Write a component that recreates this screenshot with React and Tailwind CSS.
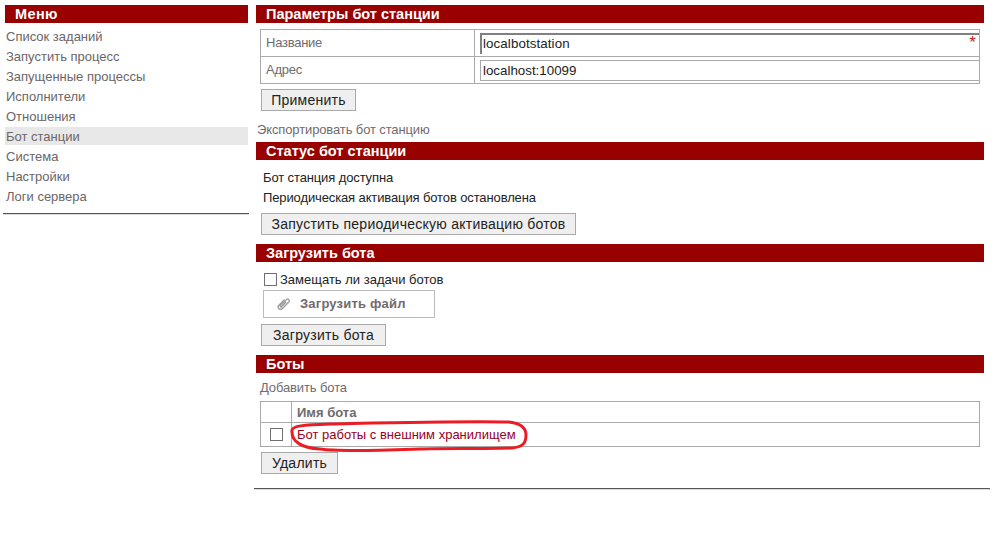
const font = { fontFamily: '"Liberation Sans", Arial, sans-serif' };

function Head({ children, className = "" }) {
  return <div className={"h-[18px] bg-[#990000] pl-[10px] text-[14.5px] leading-[18px] font-bold text-white " + className}>{children}</div>;
}

function Btn({ children, className = "" }) {
  return (
    <button className={"h-[22px] border border-[#a9a9a9] bg-[#efefef] px-0 text-[14px] leading-[19px] tracking-[0.25px] text-[#222] " + className}>
      {children}
    </button>
  );
}

const menu = ["Список заданий", "Запустить процесс", "Запущенные процессы", "Исполнители", "Отношения", "Бот станции", "Система", "Настройки", "Логи сервера"];

export default function App() {
  return (
    <div className="flex h-[537px] w-[997px] overflow-hidden bg-white text-[13px]" style={font}>
      <aside className="ml-[3px] mr-[5px] w-[246px] pt-[5px]">
        <div className="ml-[2px] w-[243px]">
          <Head className="pl-[10px] tracking-[0.4px]">Меню</Head>
          <ul className="mt-[4px] flex flex-col gap-[2px] text-[#6b6567]">
            {menu.map((m) => (
              <li key={m} className={"h-[18px] pl-[1px] leading-[20px] " + (m === "Бот станции" ? "bg-[#e8e8e8]" : "")}>{m}</li>
            ))}
          </ul>
        </div>
        <div className="mt-[8px] h-[2px] border-t border-[#555] border-b-[#ddd] border-b" />
      </aside>

      <main className="relative w-[736px] pt-[5px]">
        <div className="ml-[2px] w-[728px]">
          <Head>Параметры бот станции</Head>
          <table className="mt-[6px] ml-[4px] w-[720px] table-fixed border-collapse border border-[#aaa] text-[#706b6d]">
            <tbody>
              <tr className="h-[27px]">
                <td className="w-[214px] border border-[#aaa] pl-[5px] tracking-[-0.25px]">Название</td>
                <td className="border border-[#aaa] pl-[5px] pr-0">
                  <div className="relative h-[21px] border-2 border-r-0 border-b-0 border-[#808080] pl-[1px] text-[13.33px] leading-[18px] tracking-[0.1px] text-[#222]">
                    localbotstation
                    <span className="absolute -top-[2px] right-[3px] text-[17px] leading-[20px] text-[#c02020]">*</span>
                  </div>
                </td>
              </tr>
              <tr className="h-[27px]">
                <td className="border border-[#aaa] pl-[5px] tracking-[-0.25px]">Адрес</td>
                <td className="border border-[#aaa] pl-[5px] pr-0">
                  <div className="h-[21px] border border-r-0 border-[#aaa] pl-[2px] text-[13.33px] leading-[19px] text-[#222]">localhost:10099</div>
                </td>
              </tr>
            </tbody>
          </table>
          <Btn className="mt-[5px] ml-[5px] block w-[95px]">Применить</Btn>
          <div className="mt-[11px] ml-[1px] leading-[16px] tracking-[-0.12px] text-[#706b6d]">Экспортировать бот станцию</div>

          <Head className="mt-[4px]">Статус бот станции</Head>
          <div className="mt-[8px] ml-[7px] leading-[20px] tracking-[-0.12px] text-[#222]">
            <div>Бот станция доступна</div>
            <div>Периодическая активация ботов остановлена</div>
          </div>
          <Btn className="mt-[5px] ml-[5px] block w-[315px]">Запустить периодическую активацию ботов</Btn>

          <Head className="mt-[9px]">Загрузить бота</Head>
          <label className="mt-[10px] ml-[8px] flex h-[14px] items-center text-[#222]">
            <span className="mr-[3px] h-[13px] w-[13px] border border-[#707070] bg-white" />
            <span className="pt-[2px]">Замещать ли задачи ботов</span>
          </label>
          <div className="mt-[4px] ml-[7px] flex h-[28px] w-[172px] items-center border border-[#bbb] pl-[12px] text-[13px] font-bold tracking-[0.2px] text-[#706b6d]">
            <svg className="mr-[9px]" width="15" height="16" viewBox="0 0 16 16" fill="none" stroke="#a0a0a0" strokeWidth="1.5" strokeLinecap="round" strokeLinejoin="round">
              <g transform="rotate(45 8 8)">
                <path d="M5.5 4.5 V12.5 a2.5 2.5 0 0 0 5 0 V2.5 a1.8 1.8 0 0 0 -3.6 0 V11.5 a.8 .8 0 0 0 1.6 0 V5" />
              </g>
            </svg>
            Загрузить файл
          </div>
          <Btn className="mt-[6px] ml-[5px] block w-[125px]">Загрузить бота</Btn>

          <Head className="mt-[9px]">Боты</Head>
          <div className="mt-[7px] ml-[4px] leading-[16px] tracking-[-0.12px] text-[#706b6d]">Добавить бота</div>
          <table className="mt-[5px] ml-[4px] w-[720px] table-fixed border-collapse border border-[#aaa]">
            <tbody>
              <tr className="h-[21px]">
                <td className="w-[31px] border border-[#aaa]" />
                <td className="border border-[#aaa] pl-[5px] pt-[1px] leading-[18px] font-bold text-[#706b6d]">Имя бота</td>
              </tr>
              <tr className="h-[24px]">
                <td className="border border-[#aaa]">
                  <span className="ml-[9px] block h-[13px] w-[13px] border border-[#707070]" />
                </td>
                <td className="border border-[#aaa] pl-[5px] text-[#990022]">Бот работы с внешним хранилищем</td>
              </tr>
            </tbody>
          </table>
          <Btn className="mt-[5px] ml-[5px] block w-[77px]">Удалить</Btn>
        </div>
        <div className="mt-[14px] h-[2px] border-t border-[#555] border-b border-b-[#ddd]" />

        <svg className="absolute left-[36px] top-[420px]" width="240" height="34" viewBox="0 0 240 34" fill="none">
          <path d="M2 10 C3 6 12 5 40 4 C90 3 170 1 218 2 C230 3 236 7 236 15 C236 24 232 27 222 28 C190 29 150 28 130 29 C100 30 50 32 30 29 C12 28 1 22 2 10 Z" stroke="#ed1c24" strokeWidth="3" />
        </svg>
      </main>
    </div>
  );
}
